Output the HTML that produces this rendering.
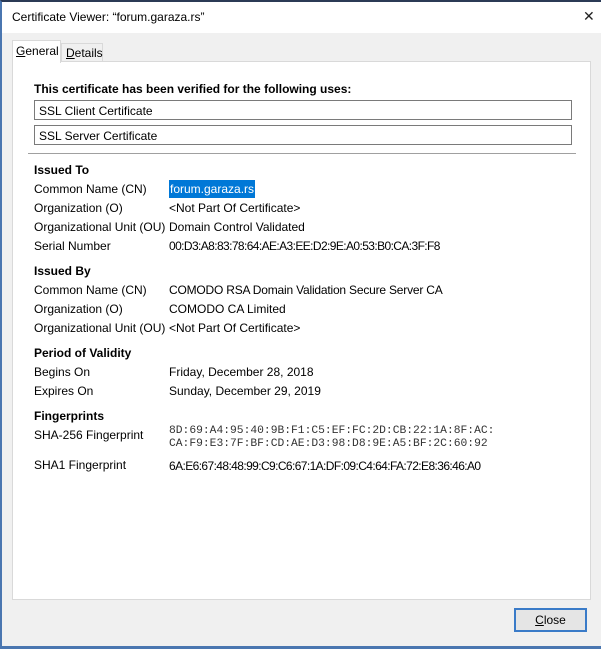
<!DOCTYPE html>
<html><head><meta charset="utf-8"><style>
*{margin:0;padding:0;box-sizing:border-box}
body{width:601px;height:649px;background:#f0f0f0;font-family:"Liberation Sans",sans-serif;font-size:12px;color:#000;position:relative;overflow:hidden}
.frame{position:absolute;left:0;top:0;width:601px;height:649px;border-left:2px solid #4a76b0;border-top:2px solid #2b3a55;border-bottom:3px solid #4a76b0}
.title{position:absolute;left:2px;top:2px;right:0;height:31px;background:#fff}
.title span{position:absolute;left:10px;top:8px;font-size:12px}
.x{position:absolute;left:583px;top:9px;font-size:14px;line-height:14px;font-weight:300;color:#222}
.panel{position:absolute;left:12px;top:61px;width:579px;height:539px;background:#fff;border:1px solid #d9d9d9}
.tab{position:absolute;background:#f0f0f0;border:1px solid #d9d9d9;border-bottom:none;font-size:12px}
.t{position:absolute;font-size:12px;white-space:nowrap}
.b{font-weight:bold}
.box{position:absolute;left:34px;width:538px;height:20px;border:1px solid #7a7a7a;background:#fff;padding:3px 0 0 4px}
.mono{font-family:"Liberation Mono",monospace;font-size:11.3px;color:#333}
.hex{letter-spacing:-0.6px}
.btn{position:absolute;left:514px;top:608px;width:73px;height:24px;border:2px solid #3a7bc8;background:#e5e5e5;text-align:center;padding-top:3px}
</style></head><body>
<div class="frame"></div>
<div class="title"><span>Certificate Viewer: “forum.garaza.rs”</span></div>
<div class="x">✕</div>
<div class="panel"></div>
<div class="tab" style="left:61px;top:43px;width:42px;height:18px;padding:2px 0 0 4px"><u>D</u>etails</div>
<div class="tab" style="left:12px;top:40px;width:49px;height:23px;background:#fff;padding:3px 0 0 3px;border-bottom:none"><u>G</u>eneral</div>
<div class="t b" style="left:34px;top:82px">This certificate has been verified for the following uses:</div>
<div class="box" style="top:100px">SSL Client Certificate</div>
<div class="box" style="top:125px">SSL Server Certificate</div>
<div style="position:absolute;left:28px;top:153px;width:548px;height:1px;background:#a0a0a0"></div>

<div class="t b" style="left:34px;top:163px">Issued To</div>
<div class="t" style="left:34px;top:182px">Common Name (CN)</div><div class="t" style="left:169px;top:180px;background:#0078d7;color:#fff;padding:2px 1px">forum.garaza.rs</div>
<div class="t" style="left:34px;top:201px">Organization (O)</div><div class="t" style="left:169px;top:201px">&lt;Not Part Of Certificate&gt;</div>
<div class="t" style="left:34px;top:220px">Organizational Unit (OU)</div><div class="t" style="left:169px;top:220px">Domain Control Validated</div>
<div class="t" style="left:34px;top:239px">Serial Number</div><div class="t hex" style="left:169px;top:239px">00:D3:A8:83:78:64:AE:A3:EE:D2:9E:A0:53:B0:CA:3F:F8</div>

<div class="t b" style="left:34px;top:264px">Issued By</div>
<div class="t" style="left:34px;top:283px">Common Name (CN)</div><div class="t" style="left:169px;top:283px;letter-spacing:-0.2px">COMODO RSA Domain Validation Secure Server CA</div>
<div class="t" style="left:34px;top:302px">Organization (O)</div><div class="t" style="left:169px;top:302px">COMODO CA Limited</div>
<div class="t" style="left:34px;top:321px">Organizational Unit (OU)</div><div class="t" style="left:169px;top:321px">&lt;Not Part Of Certificate&gt;</div>

<div class="t b" style="left:34px;top:346px">Period of Validity</div>
<div class="t" style="left:34px;top:365px">Begins On</div><div class="t" style="left:169px;top:365px">Friday, December 28, 2018</div>
<div class="t" style="left:34px;top:384px">Expires On</div><div class="t" style="left:169px;top:384px">Sunday, December 29, 2019</div>

<div class="t b" style="left:34px;top:409px">Fingerprints</div>
<div class="t" style="left:34px;top:428px">SHA-256 Fingerprint</div>
<div class="t mono" style="left:169px;top:425px">8D:69:A4:95:40:9B:F1:C5:EF:FC:2D:CB:22:1A:8F:AC:</div>
<div class="t mono" style="left:169px;top:438px">CA:F9:E3:7F:BF:CD:AE:D3:98:D8:9E:A5:BF:2C:60:92</div>
<div class="t" style="left:34px;top:458px">SHA1 Fingerprint</div><div class="t hex" style="left:169px;top:459px">6A:E6:67:48:48:99:C9:C6:67:1A:DF:09:C4:64:FA:72:E8:36:46:A0</div>

<div class="btn"><u>C</u>lose</div>
</body></html>
